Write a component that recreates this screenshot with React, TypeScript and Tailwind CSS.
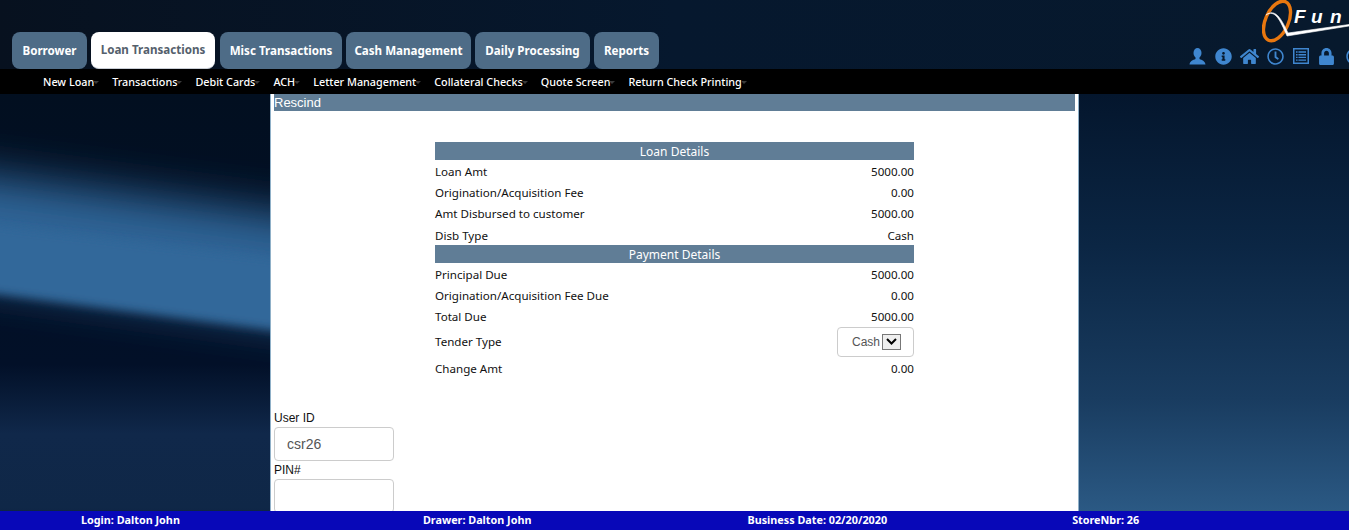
import { FaHome, FaInfoCircle, FaLock, FaRegClock } from 'react-icons/fa'

const tabs = [
  { label: 'Borrower', width: 'w-[75px]' },
  { label: 'Loan Transactions', width: 'w-[124px] mr-px', active: true },
  { label: 'Misc Transactions', width: 'w-[122px]' },
  { label: 'Cash Management', width: 'w-[125px]' },
  { label: 'Daily Processing', width: 'w-[115px]' },
  { label: 'Reports', width: 'w-[65px]' },
]

const subMenu = ['New Loan', 'Transactions', 'Debit Cards', 'ACH', 'Letter Management', 'Collateral Checks', 'Quote Screen', 'Return Check Printing']

const loanRows = [
  ['Loan Amt', '5000.00'],
  ['Origination/Acquisition Fee', '0.00'],
  ['Amt Disbursed to customer', '5000.00'],
  ['Disb Type', 'Cash'],
]

const paymentRows = [
  ['Principal Due', '5000.00'],
  ['Origination/Acquisition Fee Due', '0.00'],
  ['Total Due', '5000.00'],
]

function Row({ label, value }: { label: string; value: string }) {
  return (
    <div className="flex h-[21.25px] items-center justify-between pt-[2px]">
      <span>{label}</span>
      <span>{value}</span>
    </div>
  )
}

function SectionBar({ title }: { title: string }) {
  return <div className="h-[18px] bg-[#607d96] text-center text-[12px] leading-[19px] text-white">{title}</div>
}

function Logo() {
  return (
    <svg width="87" height="43" viewBox="0 0 87 43" fill="none" className="shrink-0">
      <ellipse cx="15" cy="21" rx="11.5" ry="21" transform="rotate(24 15 21)" stroke="#e8770f" strokeWidth="3.4" />
      <path d="M4 15 C13 9 18 20 25 36 L87 26 L87 24.5 L26 33 C19 18 13 8 4 15Z" fill="#fff" stroke="#fff" strokeWidth="0.6" />
      <text x="32 49 68" y="23" fill="#fff" fontSize="19" fontStyle="italic" fontWeight="700" fontFamily="'Liberation Sans', sans-serif">Fun</text>
    </svg>
  )
}

function UserIcon() {
  return (
    <svg width="17" height="17" viewBox="0 0 17 17" fill="currentColor">
      <ellipse cx="8.5" cy="5" rx="4" ry="5" />
      <path d="M6.5 9 L6.5 11 C4 12 1 13 0.5 16.5 L16.5 16.5 C16 13 13 12 10.5 11 L10.5 9Z" />
    </svg>
  )
}

function ListIcon() {
  return (
    <svg width="16" height="16" viewBox="0 0 16 16" fill="none" stroke="currentColor">
      <rect x="0.75" y="0.75" width="14.5" height="14.5" strokeWidth="1.5" />
      <path d="M3 4h10M3 6.7h10M3 9.4h10M3 12.1h10" strokeWidth="1.4" />
      <path d="M5 3v10" stroke="#06182e" strokeWidth="0.8" />
    </svg>
  )
}

function Backdrop() {
  return (
    <svg className="absolute inset-0" width="1349" height="436" viewBox="0 0 1349 436" preserveAspectRatio="none">
      <defs>
        <linearGradient id="rightFade" x1="0" y1="0" x2="0" y2="1">
          <stop offset="0" stopColor="#04162d" />
          <stop offset="0.35" stopColor="#0b2644" />
          <stop offset="0.7" stopColor="#193c60" />
          <stop offset="1" stopColor="#2e5e8a" />
        </linearGradient>
        <linearGradient id="leftFade" x1="0" y1="0" x2="0" y2="1">
          <stop offset="0" stopColor="#020f20" />
          <stop offset="0.62" stopColor="#021028" />
          <stop offset="0.78" stopColor="#10284a" />
          <stop offset="0.95" stopColor="#0f2747" />
          <stop offset="1" stopColor="#071a33" />
        </linearGradient>
        <filter id="soft" x="-50%" y="-100%" width="200%" height="300%"><feGaussianBlur stdDeviation="22" /></filter>
        <filter id="edge" x="-50%" y="-100%" width="200%" height="300%"><feGaussianBlur stdDeviation="5" /></filter>
      </defs>
      <rect width="1349" height="436" fill="url(#rightFade)" />
      <rect width="700" height="436" fill="url(#leftFade)" />
      <path d="M-60 75 L320 125 L320 232 L-60 180Z" fill="#2f6395" filter="url(#soft)" />
      <path d="M-60 125 L320 170 L320 242 L-60 192Z" fill="#33689a" filter="url(#edge)" />
    </svg>
  )
}

export default function App() {
  return (
    <div className="relative flex h-[530px] flex-col overflow-hidden bg-[#04162b] font-['Liberation_Sans',sans-serif] text-[11.6px] text-[#111]">
      <div className="flex h-[69px] items-end justify-between bg-gradient-to-r from-[#07111f] via-[#06182e] to-[#07192d] pl-3">
        <div className="flex gap-1">
          {tabs.map((tab) => (
            <div
              key={tab.label}
              className={`flex h-[37px] items-center justify-center rounded-lg font-['Noto_Sans',sans-serif] text-[11.6px] font-bold ${tab.width} ${
                tab.active ? 'border-b border-[#c9ced6] bg-white text-[#54606c]' : 'bg-[#4e6c87] text-white'
              }`}
            >
              {tab.label}
            </div>
          ))}
        </div>
        <div className="flex w-[165px] flex-col items-end self-stretch overflow-hidden">
          <Logo />
          <div className="mt-[4px] flex h-[18px] items-center self-start text-[#3f86cf]">
            <span className="flex w-[26px] justify-center"><UserIcon /></span>
            <span className="flex w-[26px] justify-center"><FaInfoCircle size={17} /></span>
            <span className="flex w-[26px] justify-center"><FaHome size={19} /></span>
            <span className="flex w-[26px] justify-center"><FaRegClock size={17} /></span>
            <span className="flex w-[26px] justify-center"><ListIcon /></span>
            <span className="flex w-[24px] justify-center"><FaLock size={17} /></span>
            <span className="ml-[8px] flex shrink-0"><FaRegClock size={17} /></span>
          </div>
        </div>
      </div>

      <div className="flex h-[25px] items-center bg-black pt-px pl-[43px] font-['Noto_Sans',sans-serif] text-[10.8px] font-medium text-white">
        {subMenu.map((item) => (
          <div key={item} className="relative mr-[18px]">
            {item}
            <span className="absolute top-[7px] -right-[5px] border-x-[3px] border-t-[3px] border-x-transparent border-t-[#3a3a3a]" />
          </div>
        ))}
      </div>

      <div className="relative flex flex-1 justify-center overflow-hidden">
        <Backdrop />
        <div className="relative z-10 h-full w-[809px] border-x border-[#8fb0c8] bg-white px-[3px]">
          <div className="h-[17px] bg-[#607d96] text-[13px] leading-[18px] text-white">Rescind</div>
          <div className="mt-[31px] ml-[161px] w-[479px] font-['Noto_Sans',sans-serif]">
            <SectionBar title="Loan Details" />
            {loanRows.map(([label, value]) => (
              <Row key={label} label={label} value={value} />
            ))}
            <SectionBar title="Payment Details" />
            {paymentRows.map(([label, value]) => (
              <Row key={label} label={label} value={value} />
            ))}
            <div className="flex h-[30px] items-center justify-between">
              <span>Tender Type</span>
              <div className="flex h-[30px] w-[77px] items-center justify-center gap-[2px] rounded border border-[#ccc] pl-[2px] font-['Liberation_Sans',sans-serif] text-[12px] text-[#555]">
                Cash
                <span className="flex h-[16px] w-[19px] items-center justify-center border border-[#777] bg-[#eee]">
                  <svg width="11" height="7" viewBox="0 0 11 7" fill="none" stroke="#000" strokeWidth="2">
                    <path d="M1 1l4.5 4.5L10 1" />
                  </svg>
                </span>
              </div>
            </div>
            <Row label="Change Amt" value="0.00" />
          </div>
          <div className="mt-[32px] text-[12px]">
            <div className="h-[17px] leading-[16px]">User ID</div>
            <div className="flex h-[34px] w-[120px] items-center rounded border border-[#ccc] pl-[12px] text-[14px] text-[#555]">csr26</div>
            <div className="mt-[1px] h-[17px] leading-[16px]">PIN#</div>
            <div className="h-[34px] w-[120px] rounded border border-[#ccc]" />
          </div>
        </div>
      </div>

      <div className="absolute inset-x-0 bottom-0 z-20 flex h-[19px] items-center bg-[#0808b8] font-['Noto_Sans',sans-serif] text-[10.8px] font-bold text-white">
        <span className="ml-[81px]">Login: Dalton John</span>
        <span className="ml-[243px]">Drawer: Dalton John</span>
        <span className="ml-[216px]">Business Date: 02/20/2020</span>
        <span className="ml-[185px]">StoreNbr: 26</span>
      </div>
    </div>
  )
}
